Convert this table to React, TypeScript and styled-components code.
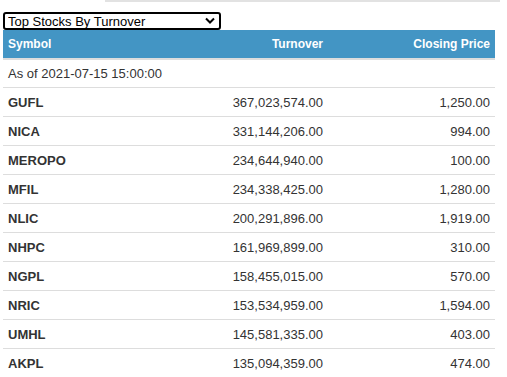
import React from "react";
import styled, { createGlobalStyle } from "styled-components";

const Global = createGlobalStyle`
  html, body { margin: 0; padding: 0; background: #fff; }
  body { font-family: "Liberation Sans", Arial, sans-serif; color: #333; }
`;

const Page = styled.div`
  width: 507px;
  padding: 0 12px 0 3px;
  box-sizing: border-box;
`;

const TopRule = styled.div`
  margin-left: 102px;
  width: 395px;
  height: 2px;
  background: #e2e2e2;
`;

const SelectWrap = styled.div`
  position: relative;
  width: 218px;
  height: 18px;
  margin-top: 10px;
`;

const Select = styled.select`
  appearance: none;
  -webkit-appearance: none;
  width: 100%;
  height: 100%;
  box-sizing: border-box;
  border: 2px solid #000;
  border-radius: 3px;
  background: #fff;
  color: #000;
  font-family: "Liberation Sans", Arial, sans-serif;
  font-size: 13px;
  padding: 0 0 0 3px;
  margin: 0;
  outline: none;
`;

const Chevron = styled.svg`
  position: absolute;
  right: 6px;
  top: 5px;
  pointer-events: none;
`;

const Table = styled.table`
  width: 492px;
  border-collapse: collapse;
  table-layout: fixed;
`;

const HeadCell = styled.th<{ $align?: string; $w: number }>`
  width: ${(p) => p.$w}px;
  height: 29px;
  padding: 0 5px;
  background: #4395c4;
  color: #fff;
  font-size: 12px;
  font-weight: bold;
  text-align: ${(p) => p.$align || "left"};
  border-bottom: 2px solid #ddd;
  box-sizing: border-box;
`;

const Cell = styled.td<{ $align?: string; $bold?: boolean }>`
  height: 28px;
  padding: 0 5px;
  font-size: 13px;
  color: #333;
  font-weight: ${(p) => (p.$bold ? "bold" : "normal")};
  text-align: ${(p) => p.$align || "left"};
  border-top: 1px solid #ddd;
  white-space: nowrap;
`;

const AsOfCell = styled.td`
  height: 27px;
  padding: 0 5px;
  font-size: 13px;
  color: #333;
`;

const rows: [string, string, string][] = [
  ["GUFL", "367,023,574.00", "1,250.00"],
  ["NICA", "331,144,206.00", "994.00"],
  ["MEROPO", "234,644,940.00", "100.00"],
  ["MFIL", "234,338,425.00", "1,280.00"],
  ["NLIC", "200,291,896.00", "1,919.00"],
  ["NHPC", "161,969,899.00", "310.00"],
  ["NGPL", "158,455,015.00", "570.00"],
  ["NRIC", "153,534,959.00", "1,594.00"],
  ["UMHL", "145,581,335.00", "403.00"],
  ["AKPL", "135,094,359.00", "474.00"],
];

export default function App() {
  return (
    <Page>
      <Global />
      <TopRule />
      <SelectWrap>
        <Select defaultValue="turnover">
          <option value="turnover">Top Stocks By Turnover</option>
          <option value="gainers">Top Gainers</option>
          <option value="losers">Top Losers</option>
        </Select>
        <Chevron width="10" height="8" viewBox="0 0 10 8">
          <path d="M1 1.5 L5 5.5 L9 1.5" fill="none" stroke="#000" strokeWidth="2" />
        </Chevron>
      </SelectWrap>
      <Table>
        <thead>
          <tr>
            <HeadCell $w={167}>Symbol</HeadCell>
            <HeadCell $w={158} $align="right">Turnover</HeadCell>
            <HeadCell $w={167} $align="right">Closing Price</HeadCell>
          </tr>
        </thead>
        <tbody>
          <tr>
            <AsOfCell colSpan={3}>As of 2021-07-15 15:00:00</AsOfCell>
          </tr>
          {rows.map(([s, t, c]) => (
            <tr key={s}>
              <Cell $bold>{s}</Cell>
              <Cell $align="right">{t}</Cell>
              <Cell $align="right">{c}</Cell>
            </tr>
          ))}
        </tbody>
      </Table>
    </Page>
  );
}
